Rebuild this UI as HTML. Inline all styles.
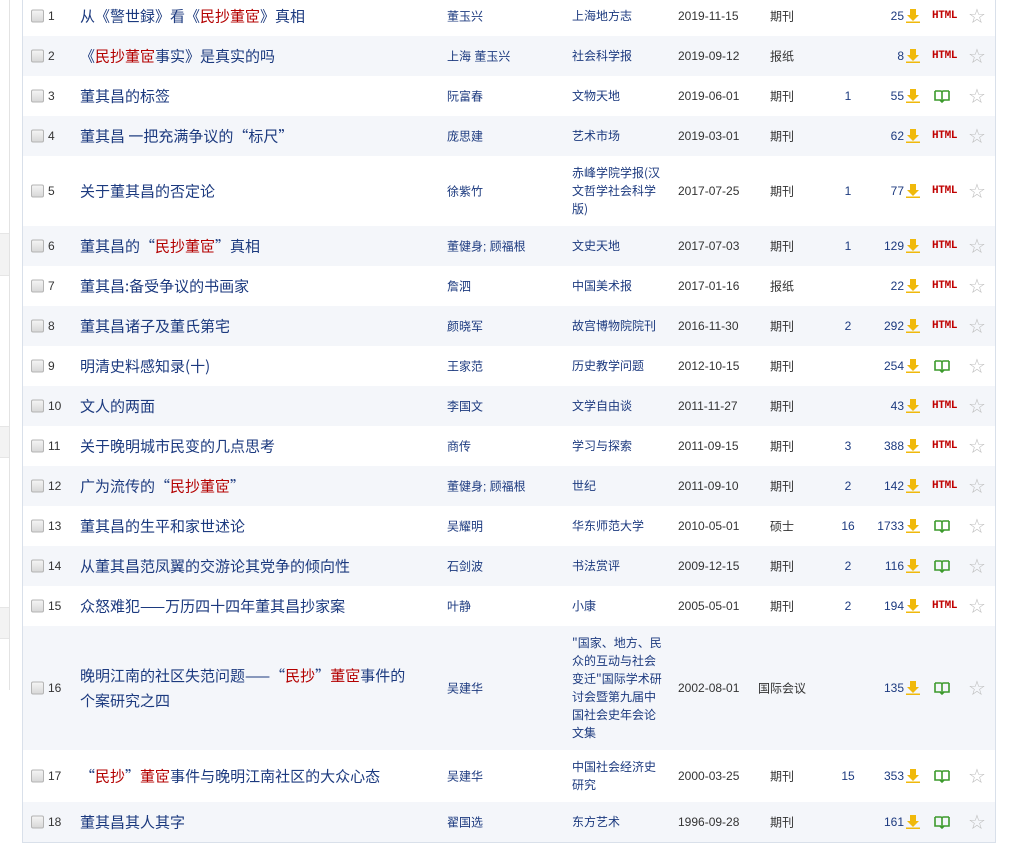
<!DOCTYPE html>
<html><head><meta charset="utf-8"><style>
body{margin:0;width:1028px;height:846px;background:#fff;position:relative;overflow:hidden;font-family:"Liberation Sans","Noto Sans CJK SC",sans-serif;}
.side{position:absolute;left:0;top:0;width:9px;height:690px;border-right:1px solid #e3e3e3}
.band{position:absolute;left:0;width:9px;background:#f3f3f3;border-top:1px solid #e6e6e6;border-bottom:1px solid #e6e6e6}
.box{position:absolute;left:22px;top:-5px;width:972px;height:847px;border:1px solid #d9e0ea;border-top:none}
.r{position:absolute;left:23px;width:972px;background:#fff}
.g{background:#f4f6fa}
.r>*{position:absolute;top:50%;transform:translateY(-50%);white-space:nowrap}
.cb{left:8px;width:11px;height:11px;border:1px solid #b4b4b4;border-radius:2px;background:linear-gradient(#f4f4f4,#d8d8d8)}
.n{left:25px;font-size:12px;color:#333}
.t{left:57px;font-size:15px;color:#1c3a7f;font-family:"Noto Sans CJK SC","Liberation Sans",sans-serif}
.t em{font-style:normal;color:#b30000}
.a{left:424px;font-size:12px;color:#1c3a7f}
.s{left:549px;font-size:12px;color:#1c3a7f;white-space:normal;width:90px;line-height:18px;font-family:"Noto Sans CJK SC",sans-serif}
.d{left:655px;font-size:12px;color:#333}
.k{left:747px;font-size:12px;color:#333}
.c{left:815px;width:20px;text-align:center;font-size:12px;color:#1c3a7f}
.dl{right:75px;font-size:12px;color:#1c3a7f;display:flex;align-items:center}
.dl svg{margin-left:2px}
.h{left:909px;font-family:"Liberation Mono",monospace;font-size:11px;color:#c00000;font-weight:bold;letter-spacing:-0.3px}
.bk{left:911px}
.st{left:945px;font-size:20px;color:#bdbdbd;font-family:"DejaVu Sans",sans-serif}
</style></head><body>
<div class="side"></div>
<div class="band" style="top:233px;height:41px"></div>
<div class="band" style="top:426px;height:30px"></div>
<div class="band" style="top:607px;height:30px"></div>
<div class="box"></div>
<svg width="0" height="0" style="position:absolute"><defs>
<symbol id="dw" viewBox="0 0 14 14"><path d="M4 0h6v6h3l-6 6-6-6h3z" fill="#f0b90b"/><rect x="0" y="12.5" width="14" height="1.5" fill="#f0b90b"/></symbol>
<symbol id="bo" viewBox="0 0 16 14"><path d="M1 2h5.5a1.5 1.5 0 0 1 1.5 1.5V13M15 2H9.5A1.5 1.5 0 0 0 8 3.5M1 2v9h6M15 2v9H9M6 11l2 2 2-2" fill="none" stroke="#3c9a2c" stroke-width="1.6"/></symbol>
</defs></svg>

<div class="r" style="top:-4px;height:40px"><i class="cb"></i><span class="n">1</span><span class="t">从《警世録》看《<em>民抄董宧</em>》真相</span><span class="a">董玉兴</span><span class="s">上海地方志</span><span class="d">2019-11-15</span><span class="k">期刊</span><span class="dl">25<svg width="14" height="14"><use href="#dw"/></svg></span><span class="h">HTML</span><span class="st">☆</span></div>
<div class="r g" style="top:36px;height:40px"><i class="cb"></i><span class="n">2</span><span class="t">《<em>民抄董宧</em>事实》是真实的吗</span><span class="a">上海 董玉兴</span><span class="s">社会科学报</span><span class="d">2019-09-12</span><span class="k">报纸</span><span class="dl">8<svg width="14" height="14"><use href="#dw"/></svg></span><span class="h">HTML</span><span class="st">☆</span></div>
<div class="r" style="top:76px;height:40px"><i class="cb"></i><span class="n">3</span><span class="t">董其昌的标签</span><span class="a">阮富春</span><span class="s">文物天地</span><span class="d">2019-06-01</span><span class="k">期刊</span><span class="c">1</span><span class="dl">55<svg width="14" height="14"><use href="#dw"/></svg></span><svg class="bk" width="16" height="14"><use href="#bo"/></svg><span class="st">☆</span></div>
<div class="r g" style="top:116px;height:40px"><i class="cb"></i><span class="n">4</span><span class="t">董其昌 一把充满争议的“标尺”</span><span class="a">庞思建</span><span class="s">艺术市场</span><span class="d">2019-03-01</span><span class="k">期刊</span><span class="dl">62<svg width="14" height="14"><use href="#dw"/></svg></span><span class="h">HTML</span><span class="st">☆</span></div>
<div class="r" style="top:156px;height:70px"><i class="cb"></i><span class="n">5</span><span class="t">关于董其昌的否定论</span><span class="a">徐紫竹</span><span class="s">赤峰学院学报(汉文哲学社会科学版)</span><span class="d">2017-07-25</span><span class="k">期刊</span><span class="c">1</span><span class="dl">77<svg width="14" height="14"><use href="#dw"/></svg></span><span class="h">HTML</span><span class="st">☆</span></div>
<div class="r g" style="top:226px;height:40px"><i class="cb"></i><span class="n">6</span><span class="t">董其昌的“<em>民抄董宧</em>”真相</span><span class="a">董健身; 顾福根</span><span class="s">文史天地</span><span class="d">2017-07-03</span><span class="k">期刊</span><span class="c">1</span><span class="dl">129<svg width="14" height="14"><use href="#dw"/></svg></span><span class="h">HTML</span><span class="st">☆</span></div>
<div class="r" style="top:266px;height:40px"><i class="cb"></i><span class="n">7</span><span class="t">董其昌:备受争议的书画家</span><span class="a">詹泗</span><span class="s">中国美术报</span><span class="d">2017-01-16</span><span class="k">报纸</span><span class="dl">22<svg width="14" height="14"><use href="#dw"/></svg></span><span class="h">HTML</span><span class="st">☆</span></div>
<div class="r g" style="top:306px;height:40px"><i class="cb"></i><span class="n">8</span><span class="t">董其昌诸子及董氏第宅</span><span class="a">颜晓军</span><span class="s">故宫博物院院刊</span><span class="d">2016-11-30</span><span class="k">期刊</span><span class="c">2</span><span class="dl">292<svg width="14" height="14"><use href="#dw"/></svg></span><span class="h">HTML</span><span class="st">☆</span></div>
<div class="r" style="top:346px;height:40px"><i class="cb"></i><span class="n">9</span><span class="t">明清史料感知录(十)</span><span class="a">王家范</span><span class="s">历史教学问题</span><span class="d">2012-10-15</span><span class="k">期刊</span><span class="dl">254<svg width="14" height="14"><use href="#dw"/></svg></span><svg class="bk" width="16" height="14"><use href="#bo"/></svg><span class="st">☆</span></div>
<div class="r g" style="top:386px;height:40px"><i class="cb"></i><span class="n">10</span><span class="t">文人的两面</span><span class="a">李国文</span><span class="s">文学自由谈</span><span class="d">2011-11-27</span><span class="k">期刊</span><span class="dl">43<svg width="14" height="14"><use href="#dw"/></svg></span><span class="h">HTML</span><span class="st">☆</span></div>
<div class="r" style="top:426px;height:40px"><i class="cb"></i><span class="n">11</span><span class="t">关于晚明城市民变的几点思考</span><span class="a">商传</span><span class="s">学习与探索</span><span class="d">2011-09-15</span><span class="k">期刊</span><span class="c">3</span><span class="dl">388<svg width="14" height="14"><use href="#dw"/></svg></span><span class="h">HTML</span><span class="st">☆</span></div>
<div class="r g" style="top:466px;height:40px"><i class="cb"></i><span class="n">12</span><span class="t">广为流传的“<em>民抄董宧</em>”</span><span class="a">董健身; 顾福根</span><span class="s">世纪</span><span class="d">2011-09-10</span><span class="k">期刊</span><span class="c">2</span><span class="dl">142<svg width="14" height="14"><use href="#dw"/></svg></span><span class="h">HTML</span><span class="st">☆</span></div>
<div class="r" style="top:506px;height:40px"><i class="cb"></i><span class="n">13</span><span class="t">董其昌的生平和家世述论</span><span class="a">吴耀明</span><span class="s">华东师范大学</span><span class="d">2010-05-01</span><span class="k">硕士</span><span class="c">16</span><span class="dl">1733<svg width="14" height="14"><use href="#dw"/></svg></span><svg class="bk" width="16" height="14"><use href="#bo"/></svg><span class="st">☆</span></div>
<div class="r g" style="top:546px;height:40px"><i class="cb"></i><span class="n">14</span><span class="t">从董其昌范凤翼的交游论其党争的倾向性</span><span class="a">石剑波</span><span class="s">书法赏评</span><span class="d">2009-12-15</span><span class="k">期刊</span><span class="c">2</span><span class="dl">116<svg width="14" height="14"><use href="#dw"/></svg></span><svg class="bk" width="16" height="14"><use href="#bo"/></svg><span class="st">☆</span></div>
<div class="r" style="top:586px;height:40px"><i class="cb"></i><span class="n">15</span><span class="t">众怒难犯——万历四十四年董其昌抄家案</span><span class="a">叶静</span><span class="s">小康</span><span class="d">2005-05-01</span><span class="k">期刊</span><span class="c">2</span><span class="dl">194<svg width="14" height="14"><use href="#dw"/></svg></span><span class="h">HTML</span><span class="st">☆</span></div>
<div class="r g" style="top:626px;height:124px"><i class="cb"></i><span class="n">16</span><span class="t" style="line-height:25px">晚明江南的社区失范问题——“<em>民抄</em>”<em>董宧</em>事件的<br>个案研究之四</span><span class="a">吴建华</span><span class="s">"国家、地方、民众的互动与社会变迁"国际学术研讨会暨第九届中国社会史年会论文集</span><span class="d">2002-08-01</span><span class="k" style="left:735px">国际会议</span><span class="dl">135<svg width="14" height="14"><use href="#dw"/></svg></span><svg class="bk" width="16" height="14"><use href="#bo"/></svg><span class="st">☆</span></div>
<div class="r" style="top:750px;height:52px"><i class="cb"></i><span class="n">17</span><span class="t">“<em>民抄</em>”<em>董宧</em>事件与晚明江南社区的大众心态</span><span class="a">吴建华</span><span class="s">中国社会经济史研究</span><span class="d">2000-03-25</span><span class="k">期刊</span><span class="c">15</span><span class="dl">353<svg width="14" height="14"><use href="#dw"/></svg></span><svg class="bk" width="16" height="14"><use href="#bo"/></svg><span class="st">☆</span></div>
<div class="r g" style="top:802px;height:40px"><i class="cb"></i><span class="n">18</span><span class="t">董其昌其人其字</span><span class="a">翟国选</span><span class="s">东方艺术</span><span class="d">1996-09-28</span><span class="k">期刊</span><span class="dl">161<svg width="14" height="14"><use href="#dw"/></svg></span><svg class="bk" width="16" height="14"><use href="#bo"/></svg><span class="st">☆</span></div>
</body></html>
